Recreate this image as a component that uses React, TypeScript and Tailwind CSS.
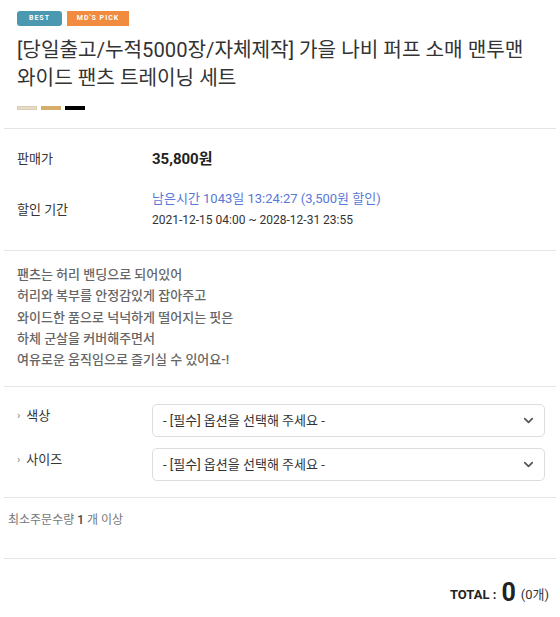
import { ChevronDown } from "lucide-react";

const font = { fontFamily: 'Roboto, "Noto Sans CJK KR", sans-serif' };

function OptionRow({ label }: { label: string }) {
  return (
    <div className="flex items-center">
      <div className="w-[148px] flex items-center text-[13px] text-[#333] pl-[13px] -mt-[10px]">
        <span className="text-[#888] text-[11px] mr-[6px]">›</span>
        {label}
      </div>
      <div className="flex-1 mr-[11px] h-[33px] border border-[#dddddd] rounded-[5px] flex items-center justify-between pl-[10px] pr-[8px] text-[13px] text-[#333]">
        <span>- [필수] 옵션을 선택해 주세요 -</span>
        <ChevronDown className="w-[15px] h-[15px] text-[#555]" strokeWidth={2.75} />
      </div>
    </div>
  );
}

export default function App() {
  return (
    <div className="bg-white w-[560px] h-[617px] px-[4px]" style={font}>
      <div className="px-[13px] pt-[11px] pb-[18px] border-b border-[#e5e5e5]">
        <div className="flex gap-[5px]">
          <span className="h-[15px] w-[45px] rounded-[3px] bg-[#4b98b1] text-white text-[7px] font-bold tracking-[1px] flex items-center justify-center">
            BEST
          </span>
          <span className="h-[15px] w-[62px] bg-[#f08b3f] text-white text-[7px] font-bold tracking-[1px] flex items-center justify-center">
            MD&apos;S PICK
          </span>
        </div>
        <h1 className="mt-[10px] text-[20.2px] leading-[28px] text-[#333] font-normal">
          [당일출고/누적5000장/자체제작] 가을 나비 퍼프 소매 맨투맨
          <br />
          와이드 팬츠 트레이닝 세트
        </h1>
        <div className="flex gap-[4px] mt-[14px]">
          <span className="w-[20px] h-[4px] bg-[#e8dcc6] border border-[#d8ccb6]" />
          <span className="w-[20px] h-[4px] bg-[#d6ad6a]" />
          <span className="w-[20px] h-[4px] bg-black" />
        </div>
      </div>

      <div className="px-[13px] pt-[18px] pb-[20px] border-b border-[#e5e5e5]">
        <div className="flex items-center h-[24px]">
          <div className="w-[135px] text-[13px] text-[#333]">판매가</div>
          <div className="text-[15px] font-bold text-[#222]">35,800원</div>
        </div>
        <div className="flex items-center mt-[18px]">
          <div className="w-[135px] text-[13px] text-[#333]">할인 기간</div>
          <div>
            <div className="text-[13px] text-[#5a78d8] leading-[20px]">
              남은시간 1043일 13:24:27 (3,500원 할인)
            </div>
            <div className="text-[12px] text-[#333] leading-[20px] mt-[1px]">
              2021-12-15 04:00 ~ 2028-12-31 23:55
            </div>
          </div>
        </div>
      </div>

      <div className="px-[13px] pt-[13px] pb-[16px] border-b border-[#e5e5e5] text-[13px] leading-[21.25px] text-[#666] font-medium">
        <p>팬츠는 허리 밴딩으로 되어있어</p>
        <p>허리와 복부를 안정감있게 잡아주고</p>
        <p>와이드한 품으로 넉넉하게 떨어지는 핏은</p>
        <p>하체 군살을 커버해주면서</p>
        <p>여유로운 움직임으로 즐기실 수 있어요-!</p>
      </div>

      <div className="pt-[17px] pb-[16px] border-b border-[#e5e5e5] flex flex-col gap-[11px]">
        <OptionRow label="색상" />
        <OptionRow label="사이즈" />
      </div>

      <div className="px-[4px] pt-[13px] pb-[29px] border-b border-[#e5e5e5] text-[12px] text-[#777]">
        최소주문수량 <span className="text-[#444] font-medium">1</span> 개 이상
      </div>

      <div className="flex items-end justify-end pr-[7px] pt-[20px] text-[#222]">
        <span className="text-[13px] font-bold mb-[3px]">TOTAL : </span>
        <span className="text-[25px] font-bold leading-[28px] ml-[5px]">0</span>
        <span className="text-[13px] text-[#333] ml-[5px] mb-[3px]">(0개)</span>
      </div>
    </div>
  );
}
